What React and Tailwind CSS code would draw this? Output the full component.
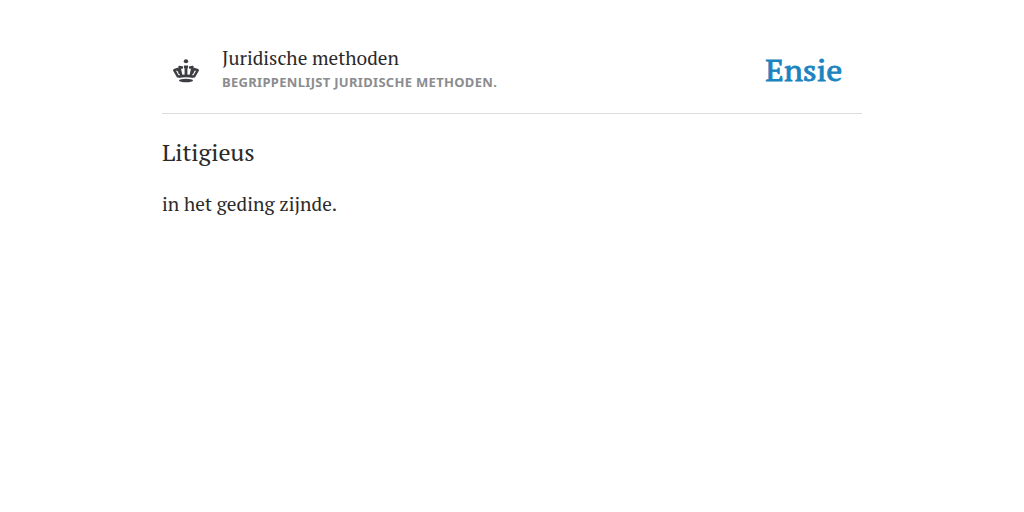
export default function App() {
  return (
    <div className="min-h-[512px] bg-white">
      <div className="mx-auto w-[700px] pt-[45px] text-[#2a2a2a]">
        <header className="flex h-[69px] items-start justify-between border-b border-[#ddd]">
          <div className="flex">
            {/* Crown */}
            <svg className="mt-[13px] ml-[10px] h-[26px] w-[28px]" viewBox="0 0 28 26" fill="none" stroke="#3c3e42">
              <ellipse cx="14" cy="3.3" rx="2.2" ry="2" fill="#3c3e42" stroke="none" />
              <ellipse cx="14" cy="22.5" rx="7" ry="1.8" fill="#3c3e42" stroke="none" />
              <path strokeWidth="2.6" d="M6.2 18.8Q14 17 21.8 18.8" />
              <path strokeWidth="2.4" strokeLinejoin="round" d="M6.2 19.2L2.2 12.2L5.9 11L8.2 16M21.8 19.2L25.8 12.2L22.1 11L19.8 16" />
              <path strokeWidth="2.3" strokeLinejoin="round" d="M9.4 17.8L7.4 8.8L11 9.7M18.6 17.8L20.6 8.8L17 9.7" />
              <path strokeWidth="2.8" d="M14 18V8M12 8.9H16" />
            </svg>
            <div className="ml-[22px]">
              <p className="h-[25px] font-['PT_Serif','Liberation_Serif',serif] text-[19.2px] leading-[25px] whitespace-nowrap">Juridische methoden</p>
              <p className="font-['Noto_Sans',sans-serif] text-[13px] leading-[24px] font-bold tracking-[0.31px] whitespace-nowrap text-[#8b8c8f] uppercase">Begrippenlijst juridische methoden.</p>
            </div>
          </div>
          <p className="mr-[20px] origin-right scale-x-[1.08] font-['PT_Serif','Liberation_Serif',serif] text-[29.6px] leading-[49px] text-[#1b84bf] [-webkit-text-stroke:0.8px_#1b84bf]">Ensie</p>
        </header>
        <main className="font-['PT_Serif','Liberation_Serif',serif]">
          <h1 className="mt-[20px] text-[24px] leading-[36px]">Litigieus</h1>
          <p className="mt-[19px] text-[19.2px] leading-[30px] tracking-[0.03px]">in het geding zijnde.</p>
        </main>
      </div>
    </div>
  );
}
